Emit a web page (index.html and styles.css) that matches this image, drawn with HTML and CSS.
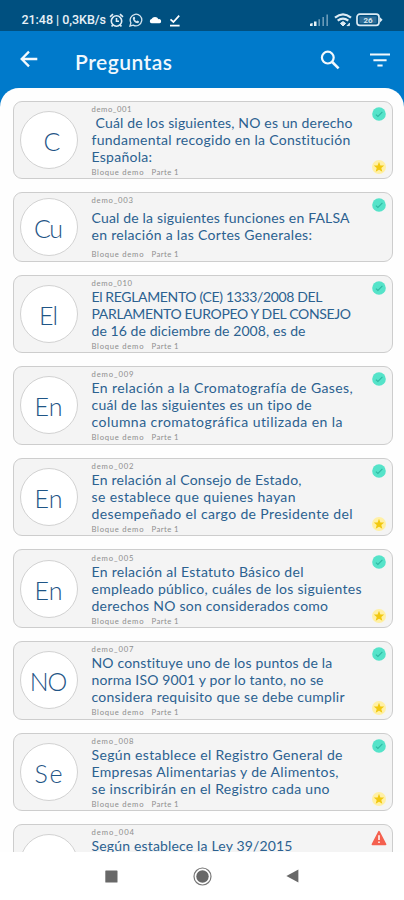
FILE: index.html
```
<!DOCTYPE html>
<html lang="es">
<head>
<meta charset="utf-8">
<title>Preguntas</title>
<link rel="stylesheet" href="styles.css">
</head>
<body>
<svg class="defs" aria-hidden="true">
  <symbol id="ok" viewBox="0 0 14 14"><circle cx="7" cy="7" r="6.8" fill="#55e3c9"/><path d="M3.9 7.6 5.9 9.5 10.4 4.8" fill="none" stroke="#2fb8a2" stroke-width="1.1"/></symbol>
  <symbol id="star" viewBox="0 0 16 16"><circle cx="8" cy="8" r="7" fill="#fff0a5"/><path d="M8 2.8 9.4 6.4 13.2 6.6 10.3 9 11.3 12.8 8 10.7 4.7 12.8 5.7 9 2.8 6.6 6.6 6.4Z" fill="#f2c80f"/></symbol>
</svg>
<div class="screen">
  <div class="status">
    <span class="clock fit" data-width="84.5">21:48 | 0,3KB/s</span>
    <svg class="s-alarm" width="15" height="15" viewBox="0 0 15 15" fill="none" stroke="#e3eef5" stroke-width="1.6"><circle cx="7.5" cy="8" r="5.2"/><path d="M1 3.8 4 1.2M14 3.8 11 1.2M7.5 5v3.2H10M3.8 12 2.6 13.6M11.2 12l1.2 1.6"/></svg>
    <svg class="s-wa" width="14" height="14" viewBox="0 0 14 14"><path d="M1 13 1.9 9.8A5.8 5.8 0 1 1 4.2 12.1Z" fill="none" stroke="#d5e5ef" stroke-width="1.3"/><path d="M4.7 3.8 5.8 4 6.2 5.5 5.6 6.2Q6.3 7.7 7.8 8.3L8.5 7.6 10.1 8.4Q10.2 10 8.4 10.2 4.5 9.5 3.8 5.5 3.9 4.2 4.7 3.8Z" fill="#d5e5ef"/></svg>
    <svg class="s-cloud" width="13" height="8" viewBox="0 0 13 8"><path d="M2.6 7.3A2.2 2.2 0 0 1 2.5 3 4 4 0 0 1 9.5 3.2 2.1 2.1 0 0 1 10.6 7.3Z" fill="#fff"/></svg>
    <svg class="s-done" width="12" height="13" viewBox="0 0 12 13" fill="none" stroke="#fff" stroke-width="1.7"><path d="M1.5 5.4 4.4 8 10.2 1.6M1 11.6h9.6"/></svg>
    <svg class="s-signal" width="19" height="12" viewBox="0 0 19 12"><path d="M0 12v-2.2L2.6 9v3ZM4 12V7.6h2.5V12Z" fill="#e8f2f8"/><path d="M9.2 12V5.3M13.2 12V3M17.2 12V.6" stroke="#6a9bb8" stroke-width="1.6" fill="none"/></svg>
    <svg class="s-wifi" width="18" height="14" viewBox="0 0 18 14" fill="none" stroke="#dcebf4" stroke-width="2.2"><path d="M1 4.6Q9-2 17 4.6M3.7 7.7q5.3-4.3 10.6 0"/><path d="m6.4 10.4 2.6-1.8 2.6 1.8L9 13ZM12.8 12.6h2.6v-2.6" fill="#dcebf4" stroke-width="1"/></svg>
    <svg class="s-bat" width="27" height="14" viewBox="0 0 27 14"><rect x="1" y="1.2" width="22" height="11.2" rx="2.8" fill="none" stroke="#dcebf4" stroke-width="1.7"/><path d="M24 4.2 26.6 6.8 24 9.6Z" fill="#dcebf4"/><rect x="3.4" y="3.4" width="17.2" height="6.8" fill="#2d6d97"/><text x="12" y="9.9" text-anchor="middle" class="bat-num">26</text></svg>
  </div>
  <header class="bar">
    <svg class="b-back" width="18" height="18" viewBox="0 0 18 18" fill="none" stroke="#f3f9fd" stroke-width="2.3"><path d="M17.3 9H2M9 1.6 1.7 9 9 16.4"/></svg>
    <h1 class="title fit" data-width="97">Preguntas</h1>
    <svg class="b-search" width="20" height="20" viewBox="0 0 20 20" fill="none" stroke="#f3f9fd" stroke-width="2.2"><circle cx="7.8" cy="7.6" r="5.9"/><path d="M12.2 12 18.6 18.4" stroke-width="2.6"/></svg>
    <svg class="b-filter" width="20" height="14" viewBox="0 0 20 14" stroke="#f3f9fd" stroke-width="2"><path d="M0 1.5h20M3.4 7.2h13.2M7.4 12.6h5.2"/></svg>
  </header>
  <main class="sheet">
    <article class="card">
      <div class="avatar first"><span class="fit" data-width="15">C</span></div>
      <div class="content"><p class="id"><span class="fit" data-width="40">demo_001</span></p>
        <div class="question"><span class="line lead"><span class="fit" data-width="257">Cuál de los siguientes, NO es un derecho</span></span><span class="line"><span class="fit" data-width="259">fundamental recogido en la Constitución</span></span><span class="line"><span class="fit" data-width="60.5">Española:</span></span></div>
        <p class="meta"><span class="fit" data-width="52">Bloque demo</span><span class="fit" data-width="27">Parte 1</span></p></div>
      <div class="marks"><svg class="ok"><use href="#ok"/></svg><svg class="star"><use href="#star"/></svg></div>
    </article>
    <article class="card short">
      <div class="avatar"><span class="fit" data-width="29">Cu</span></div>
      <div class="content"><p class="id"><span class="fit" data-width="41.5">demo_003</span></p>
        <div class="question"><span class="line"><span class="fit" data-width="258">Cual de la siguientes funciones en FALSA</span></span><span class="line"><span class="fit" data-width="220.5">en relación a las Cortes Generales:</span></span></div>
        <p class="meta"><span class="fit" data-width="52">Bloque demo</span><span class="fit" data-width="27">Parte 1</span></p></div>
      <div class="marks"><svg class="ok"><use href="#ok"/></svg></div>
    </article>
    <article class="card">
      <div class="avatar"><span class="fit" data-width="19">El</span></div>
      <div class="content"><p class="id"><span class="fit" data-width="40.5">demo_010</span></p>
        <div class="question"><span class="line"><span class="fit" data-width="231">El REGLAMENTO (CE) 1333/2008 DEL</span></span><span class="line"><span class="fit" data-width="259.5">PARLAMENTO EUROPEO Y DEL CONSEJO</span></span><span class="line"><span class="fit" data-width="214">de 16 de diciembre de 2008, es de</span></span></div>
        <p class="meta"><span class="fit" data-width="52">Bloque demo</span><span class="fit" data-width="27">Parte 1</span></p></div>
      <div class="marks"><svg class="ok"><use href="#ok"/></svg></div>
    </article>
    <article class="card">
      <div class="avatar"><span class="fit" data-width="28">En</span></div>
      <div class="content"><p class="id"><span class="fit" data-width="42">demo_009</span></p>
        <div class="question"><span class="line"><span class="fit" data-width="261">En relación a la Cromatografía de Gases,</span></span><span class="line"><span class="fit" data-width="220.5">cuál de las siguientes es un tipo de</span></span><span class="line"><span class="fit" data-width="251">columna cromatográfica utilizada en la</span></span></div>
        <p class="meta"><span class="fit" data-width="52">Bloque demo</span><span class="fit" data-width="27">Parte 1</span></p></div>
      <div class="marks"><svg class="ok"><use href="#ok"/></svg></div>
    </article>
    <article class="card">
      <div class="avatar"><span class="fit" data-width="28">En</span></div>
      <div class="content"><p class="id"><span class="fit" data-width="42">demo_002</span></p>
        <div class="question"><span class="line"><span class="fit" data-width="210">En relación al Consejo de Estado,</span></span><span class="line"><span class="fit" data-width="204">se establece que quienes hayan</span></span><span class="line"><span class="fit" data-width="261">desempeñado el cargo de Presidente del</span></span></div>
        <p class="meta"><span class="fit" data-width="52">Bloque demo</span><span class="fit" data-width="27">Parte 1</span></p></div>
      <div class="marks"><svg class="ok"><use href="#ok"/></svg><svg class="star"><use href="#star"/></svg></div>
    </article>
    <article class="card">
      <div class="avatar"><span class="fit" data-width="28">En</span></div>
      <div class="content"><p class="id"><span class="fit" data-width="42">demo_005</span></p>
        <div class="question"><span class="line"><span class="fit" data-width="212">En relación al Estatuto Básico del</span></span><span class="line"><span class="fit" data-width="270">empleado público, cuáles de los siguientes</span></span><span class="line"><span class="fit" data-width="236.5">derechos NO son considerados como</span></span></div>
        <p class="meta"><span class="fit" data-width="52">Bloque demo</span><span class="fit" data-width="27">Parte 1</span></p></div>
      <div class="marks"><svg class="ok"><use href="#ok"/></svg><svg class="star"><use href="#star"/></svg></div>
    </article>
    <article class="card">
      <div class="avatar"><span class="fit" data-width="37.5">NO</span></div>
      <div class="content"><p class="id"><span class="fit" data-width="42">demo_007</span></p>
        <div class="question"><span class="line"><span class="fit" data-width="241">NO constituye uno de los puntos de la</span></span><span class="line"><span class="fit" data-width="232">norma ISO 9001 y por lo tanto, no se</span></span><span class="line"><span class="fit" data-width="253">considera requisito que se debe cumplir</span></span></div>
        <p class="meta"><span class="fit" data-width="52">Bloque demo</span><span class="fit" data-width="27">Parte 1</span></p></div>
      <div class="marks"><svg class="ok"><use href="#ok"/></svg><svg class="star"><use href="#star"/></svg></div>
    </article>
    <article class="card">
      <div class="avatar"><span class="fit" data-width="28">Se</span></div>
      <div class="content"><p class="id"><span class="fit" data-width="42">demo_008</span></p>
        <div class="question"><span class="line"><span class="fit" data-width="251">Según establece el Registro General de</span></span><span class="line"><span class="fit" data-width="247">Empresas Alimentarias y de Alimentos,</span></span><span class="line"><span class="fit" data-width="238">se inscribirán en el Registro cada uno</span></span></div>
        <p class="meta"><span class="fit" data-width="52">Bloque demo</span><span class="fit" data-width="27">Parte 1</span></p></div>
      <div class="marks"><svg class="ok"><use href="#ok"/></svg><svg class="star"><use href="#star"/></svg></div>
    </article>
    <article class="card">
      <div class="avatar"></div>
      <div class="content"><p class="id"><span class="fit" data-width="42.5">demo_004</span></p>
        <div class="question last"><span class="line"><span class="fit" data-width="201">Según establece la Ley 39/2015</span></span></div></div>
      <div class="marks"><svg class="warn" viewBox="0 0 16 16"><path d="M8 1.6 14.6 14.4H1.4Z" fill="#f4604f" stroke="#f4604f" stroke-width="1.6" stroke-linejoin="round"/><path d="M8 5.2v4.8M8 11.4v1.6" stroke="#fff" stroke-width="1.5"/></svg></div>
    </article>
  </main>
  <nav class="nav">
    <svg width="13" height="13" viewBox="0 0 13 13"><rect x=".3" y=".5" width="12.2" height="12" rx=".6" fill="#686868"/></svg>
    <svg width="19" height="19" viewBox="0 0 19 19"><circle cx="9.5" cy="9.5" r="8.5" fill="none" stroke="#777" stroke-width="1.2"/><circle cx="9.5" cy="9.5" r="6.2" fill="#686868"/></svg>
    <svg width="13" height="14" viewBox="0 0 13 14"><path d="M.4 7 12.4.4v13.2Z" fill="#686868"/></svg>
  </nav>
</div>
<script src="fit.js"></script>
</body>
</html>
```
FILE: styles.css
```
* { box-sizing: border-box; }
body { margin: 0; background: #fff; font-family: Lato, "Liberation Sans", sans-serif; }
svg { display: block; flex: none; }
.defs { position: absolute; width: 0; height: 0; }
.screen { width: 404px; height: 900px; display: flex; flex-direction: column; overflow: hidden; background: #007acb; }
.fit { display: inline-block; white-space: nowrap; }

.status { height: 31px; flex: none; display: flex; align-items: center; padding: 9px 21px 0 21.5px; background: #005080; }
.clock { font: 500 12.5px/16px Roboto, sans-serif; color: #e8f1f7; }
.s-alarm { margin-left: 3px; }
.s-wa { margin-left: 5px; }
.s-cloud { margin-left: 6px; }
.s-done { margin-left: 7px; }
.s-signal { margin-left: auto; }
.s-wifi { margin-left: 5px; }
.s-bat { margin-left: 4px; }
.bat-num { font: 700 8px Roboto, sans-serif; fill: #d5e6f0; }

.bar { height: 57px; flex: none; display: flex; align-items: center; padding: 0 14px 0 20px; }
.b-back { margin-top: -1px; }
.title { margin: 4px 0 0 37px; font-size: 21px; line-height: 26px; font-weight: 600; color: #f0f8fd; }
.b-search { margin-left: auto; }
.b-filter { margin-left: 30px; }

.sheet { flex: 1; min-height: 0; overflow: hidden; display: flex; flex-direction: column; gap: 13px; padding: 12.6px 11.5px 0 13px; background: #fefefe; border-radius: 19px 19px 0 0; }
.card { height: 78.6px; flex: none; display: flex; align-items: center; padding-left: 5.5px; background: #f4f4f4; border: 1px solid #cdcdcd; border-radius: 9px; }
.card.short { height: 69.4px; }
.avatar { width: 58px; height: 58px; flex: none; display: flex; align-items: center; justify-content: center; padding-top: 2px; border: 1px solid #d2d2d2; border-radius: 50%; background: #fff; color: #1f5586; font-size: 25px; font-weight: 300; line-height: 30px; }
.avatar.first { padding-left: 7px; }
.content { flex: 1; height: 100%; margin-left: 14px; padding-top: 1.3px; }
.id, .meta { margin: 0; font-size: 7.7px; line-height: 12px; color: #8e8e8e; }
.id { height: 11px; }
.meta { height: 12px; display: flex; gap: 8px; margin-top: 1px; }
.question { min-height: 42px; display: flex; flex-direction: column; justify-content: center; color: #2b6190; font-size: 14px; line-height: 17px; }
.short .question { padding-bottom: 1px; }
.question.last { min-height: 0; }
.line { display: block; height: 17px; }
.lead { padding-left: 4px; }
.marks { width: 21px; height: 100%; flex: none; display: flex; flex-direction: column; align-items: center; justify-content: space-between; padding: 5px 4px 3px 0; }
.ok { width: 14px; height: 14px; }
.star { width: 16px; height: 16px; }
.warn { width: 16px; height: 16px; }

.nav { height: 48.5px; flex: none; display: flex; align-items: center; justify-content: space-between; padding: 1px 105px 0; background: #fff; }
```
FILE: fit.js
```
document.querySelectorAll(".fit").forEach(function (el) {
  var target = parseFloat(el.dataset.width);
  var count = el.textContent.length;
  if (count < 2) return;
  var gap = (target - el.getBoundingClientRect().width) / (count - 1);
  el.style.letterSpacing = gap.toFixed(3) + "px";
  el.style.marginRight = (-gap).toFixed(3) + "px";
});
```
